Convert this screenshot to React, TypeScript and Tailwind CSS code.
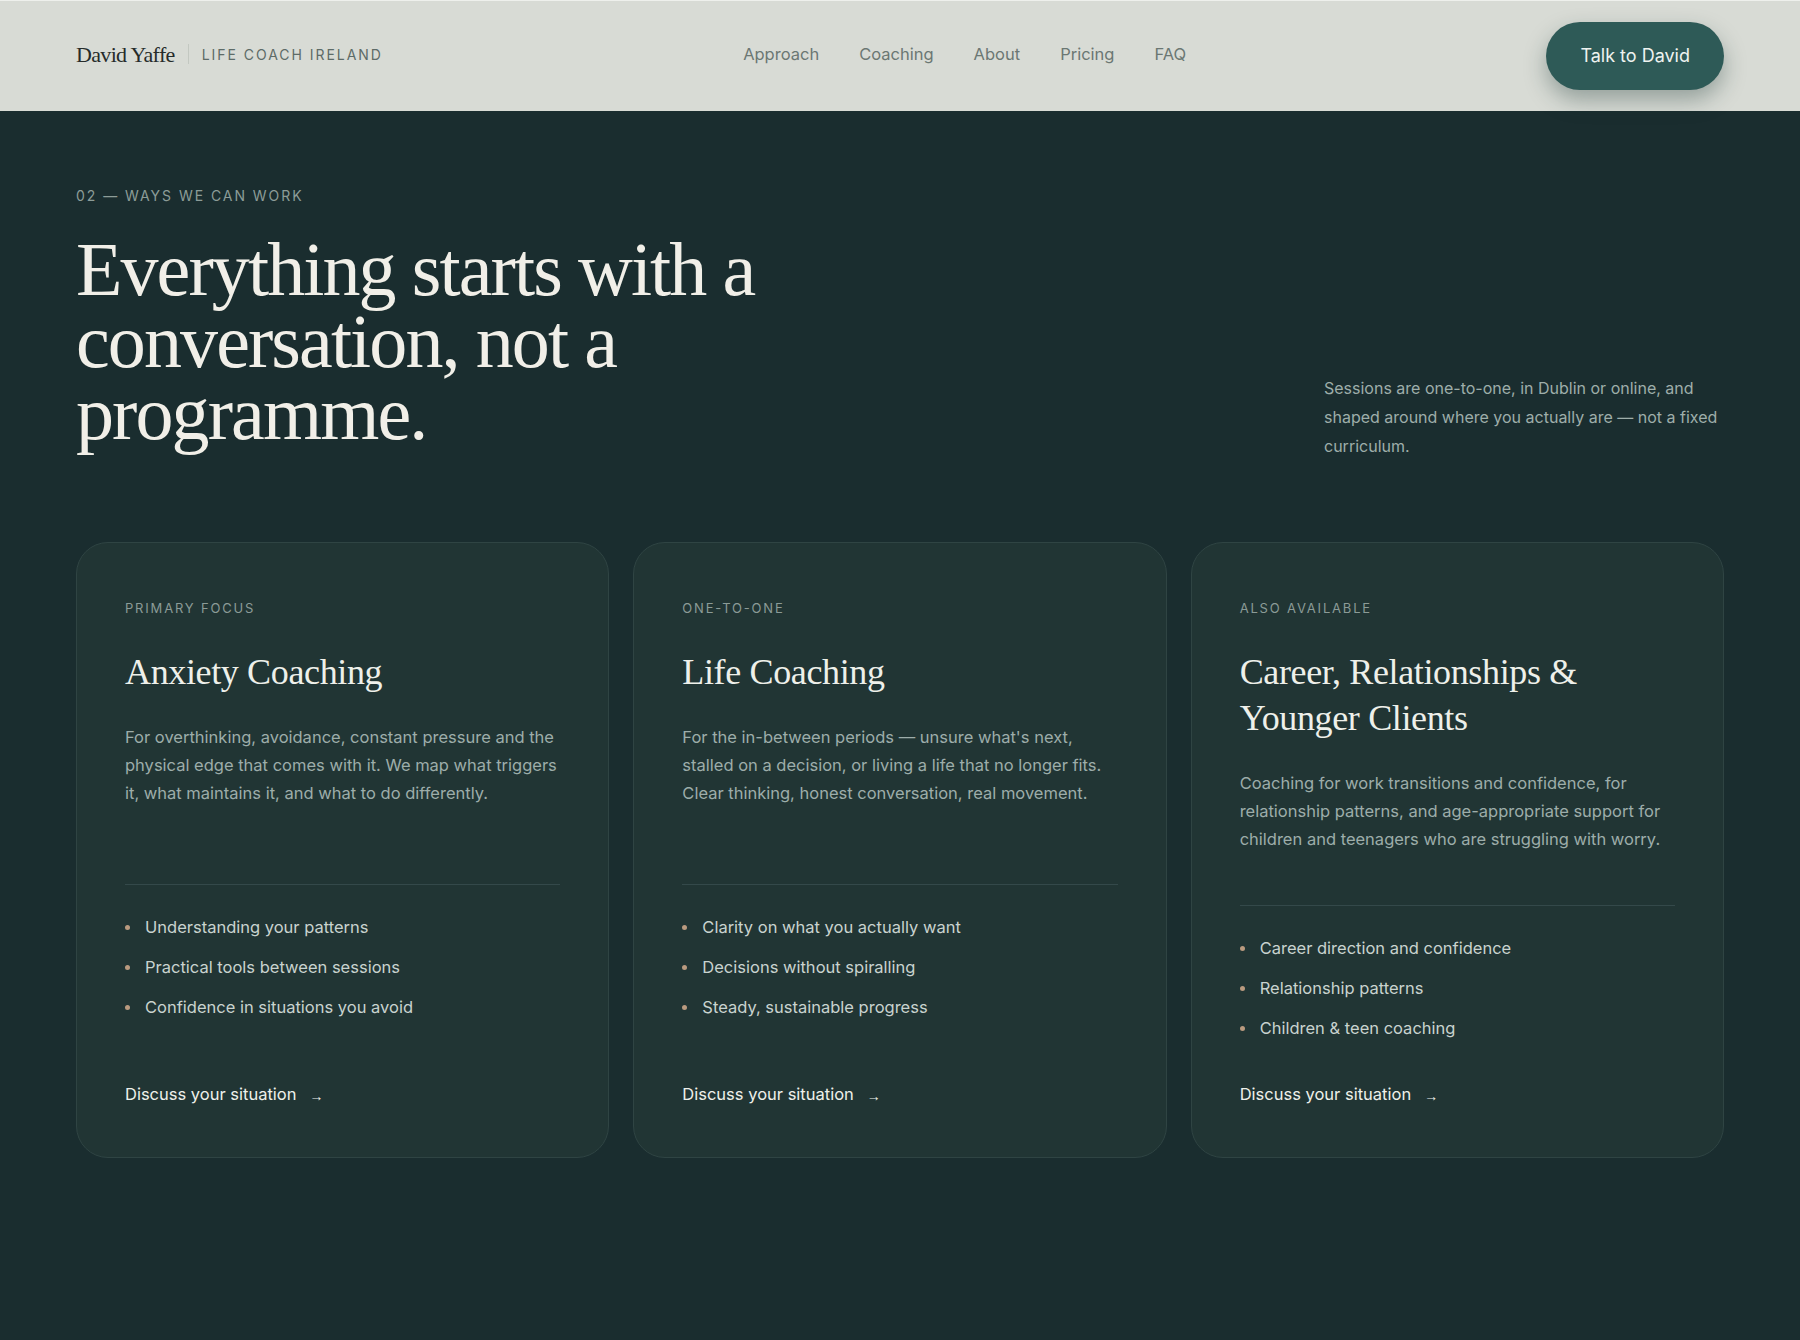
const serif = "font-['Liberation_Serif','Times_New_Roman',serif]";

const cards = [
  {
    label: "Primary focus",
    title: "Anxiety Coaching",
    body: "For overthinking, avoidance, constant pressure and the physical edge that comes with it. We map what triggers it, what maintains it, and what to do differently.",
    points: ["Understanding your patterns", "Practical tools between sessions", "Confidence in situations you avoid"],
  },
  {
    label: "One-to-one",
    title: "Life Coaching",
    body: "For the in-between periods — unsure what's next, stalled on a decision, or living a life that no longer fits. Clear thinking, honest conversation, real movement.",
    points: ["Clarity on what you actually want", "Decisions without spiralling", "Steady, sustainable progress"],
  },
  {
    label: "Also available",
    title: "Career, Relationships & Younger Clients",
    body: "Coaching for work transitions and confidence, for relationship patterns, and age-appropriate support for children and teenagers who are struggling with worry.",
    points: ["Career direction and confidence", "Relationship patterns", "Children & teen coaching"],
  },
];

function Header() {
  return (
    <header className="flex h-[111px] items-center justify-between border-t border-[#eef0ec] bg-[#d8dbd5] px-[76px]">
      <div className="-mt-[4px] flex items-center gap-[13px]">
        <span className={`${serif} text-[22px] tracking-[-0.03em] text-[#262b2a]`}>David Yaffe</span>
        <span className="h-5 w-px bg-[#c3c8c1]" />
        <span className="mt-[2px] text-sm tracking-[0.14em] text-[#5d6b67] uppercase">Life Coach Ireland</span>
      </div>
      <nav className="-mt-[3px] flex items-center gap-10 text-[16.5px] text-[#6b7773]">
        <a>Approach</a>
        <a>Coaching</a>
        <a>About</a>
        <a>Pricing</a>
        <a>FAQ</a>
      </nav>
      <button className="h-[68px] rounded-full bg-[#2e5a57] px-[34px] text-lg text-[#eef3f0] shadow-[0_10px_22px_rgba(24,52,50,0.35)]">
        Talk to David
      </button>
    </header>
  );
}

function Card({ card }: { card: (typeof cards)[number] }) {
  return (
    <div className="flex flex-col rounded-[32px] border border-[#2f4443] bg-[#213534] px-12 pt-14 pb-[51px]">
      <div className="min-h-[233px]">
        <p className="text-[13px] leading-[18px] tracking-[0.14em] text-[#8b9b97] uppercase">{card.label}</p>
        <h3 className={`${serif} mt-8 text-[36px] leading-[46px] tracking-[-0.01em] text-[#eef0ea]`}>{card.title}</h3>
        <p className="mt-7 text-[16.5px] leading-7 text-[#9dadaa]">{card.body}</p>
      </div>
      <div className="mt-[52px] h-px bg-[#34494a]" />
      <ul className="mt-[30px] flex flex-col gap-4">
        {card.points.map((p) => (
          <li key={p} className="flex items-center gap-[15px] text-[16.5px] leading-6 text-[#c9d3cf]">
            <span className="h-[5px] w-[5px] shrink-0 rounded-full bg-[#b99a7f]" />
            {p}
          </li>
        ))}
      </ul>
      <a className="mt-auto flex items-center gap-[13px] pt-[42px] text-[16.5px] leading-6 text-[#eef0ea]">
        Discuss your situation
        <span className="mt-1 font-['Liberation_Sans',sans-serif] text-sm">→</span>
      </a>
    </div>
  );
}

export default function App() {
  return (
    <div className="min-h-screen bg-[#1a2d2f] font-['Inter','Liberation_Sans',sans-serif]">
      <Header />
      <section className="px-[76px] pt-[75px] pb-20">
        <div className="flex items-end justify-between">
          <div className="pb-[12px]">
            <p className="text-sm leading-5 tracking-[0.14em] text-[#8c9c98] uppercase">02 — Ways we can work</p>
            <h2 className={`${serif} mt-[27px] max-w-[760px] text-[76px] leading-[72px] tracking-[-0.025em] text-[#f1efe8]`}>
              Everything starts with a conversation, not a programme.
            </h2>
          </div>
          <p className="w-[400px] text-base leading-[29px] text-[#9eaeaa]">
            Sessions are one-to-one, in Dublin or online, and shaped around where you actually are — not a fixed curriculum.
          </p>
        </div>
        <div className="mt-[81px] grid grid-cols-3 gap-6">
          {cards.map((c) => (
            <Card key={c.label} card={c} />
          ))}
        </div>
      </section>
    </div>
  );
}
